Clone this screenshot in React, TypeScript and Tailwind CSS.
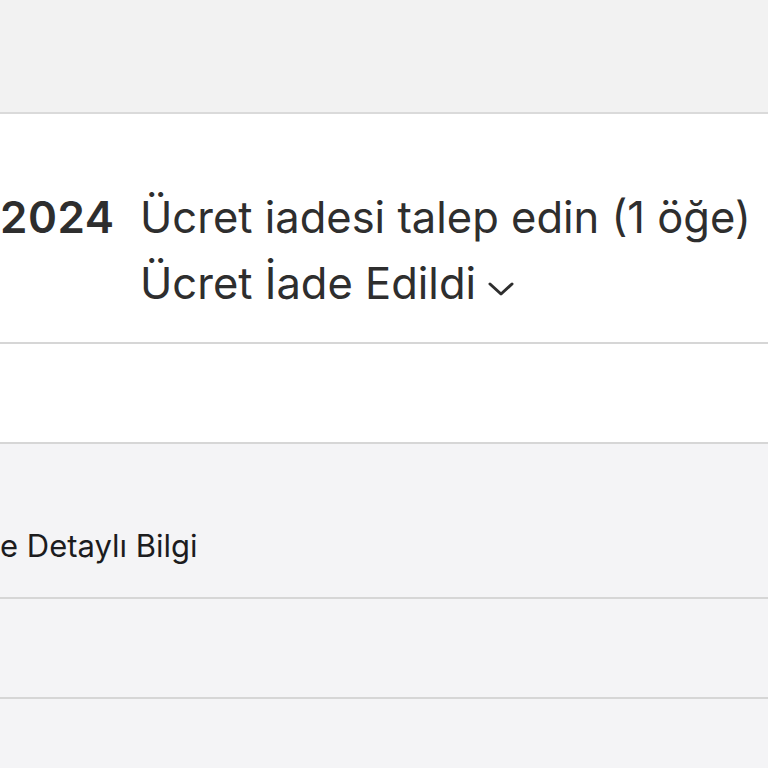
export default function App() {
  return (
    <div
      className="w-[768px] h-[768px] overflow-hidden bg-[#f4f4f6] text-[#2e2e2e]"
      style={{ fontFamily: 'Inter, "Noto Sans", sans-serif' }}
    >
      <div className="h-[114px] bg-[#f2f2f2] border-b-2 border-[#dadada]" />

      <div className="h-[230px] bg-white border-b-2 border-[#d6d6d6] flex items-start pt-[70px]">
        <div className="w-[140px] shrink-0 text-[44px] leading-[66px] font-semibold tracking-[0.5px]">
          2024
        </div>
        <div className="flex flex-col text-[43.5px] leading-[66px] whitespace-nowrap">
          <div>Ücret iadesi talep edin (1 öğe)</div>
          <div className="flex items-center gap-3">
            <span>Ücret İade Edildi</span>
            <svg width="26" height="18" viewBox="0 0 26 18" fill="none" className="mt-3">
              <path d="M2 4 L13 14 L24 4" stroke="#2e2e2e" strokeWidth="3" strokeLinecap="round" strokeLinejoin="round" />
            </svg>
          </div>
        </div>
      </div>

      <div className="h-[100px] bg-white border-b-2 border-[#d6d6d6]" />

      <div className="h-[155px] border-b-2 border-[#d6d6d6] flex items-center">
        <span className="text-[31px] text-[#1c1c1e] mt-[52px]">e Detaylı Bilgi</span>
      </div>

      <div className="h-[100px] border-b-2 border-[#d6d6d6]" />
    </div>
  )
}
